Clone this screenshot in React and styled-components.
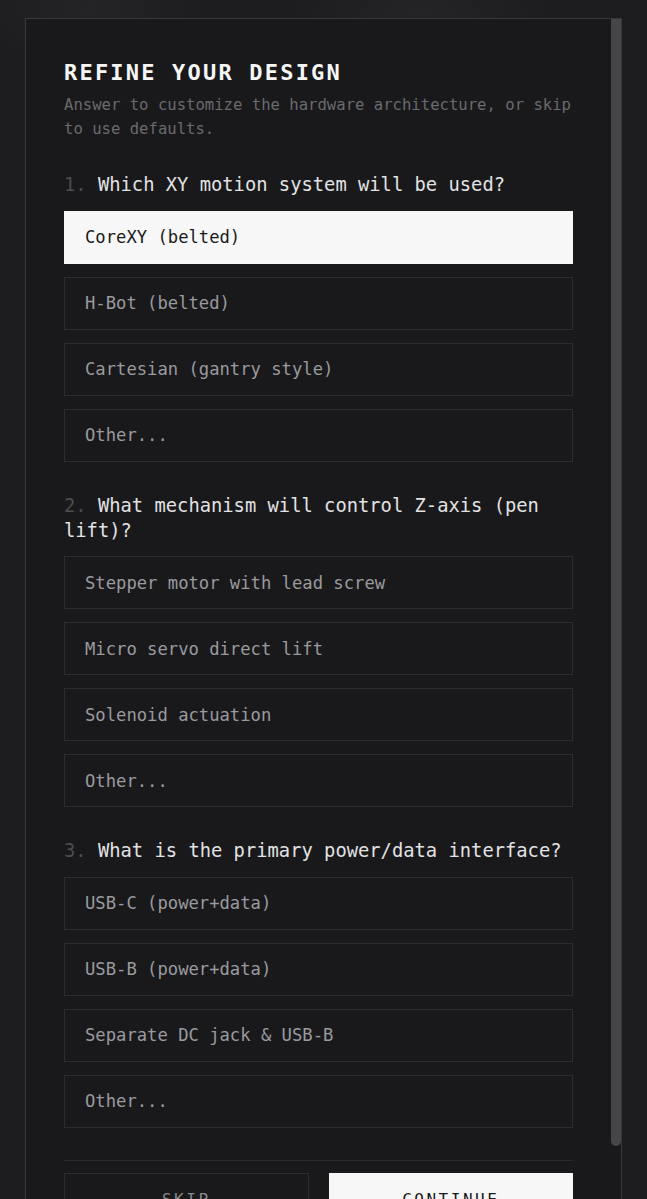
import React, { useState } from 'react'
import styled, { createGlobalStyle } from 'styled-components'

const GlobalStyle = createGlobalStyle`
	html, body {
		margin: 0;
		padding: 0;
		background: #1d1d1f;
		overflow: hidden;
	}
	* {
		box-sizing: border-box;
	}
`

const MONO = `"DejaVu Sans Mono", "Liberation Mono", monospace`

const Page = styled.div`
	min-height: 100vh;
	padding: 18px 25px 0;
	background:
		radial-gradient(ellipse 120px 60px at 90px 10px, rgba(255,255,255,0.03), transparent),
		radial-gradient(ellipse 140px 60px at 420px 15px, rgba(255,255,255,0.03), transparent),
		#1d1d1f;
	font-family: ${MONO};
`

const Modal = styled.div`
	position: relative;
	width: 597px;
	height: 1240px;
	border: 1px solid #38383c;
	background: #19191b;
	overflow: hidden;
`

// fake scrollbar thumb, sits over the right edge of the dialog
const ScrollThumb = styled.div`
	position: absolute;
	top: 0;
	right: 0;
	width: 10px;
	height: 1127px;
	background: #45454a;
	border-radius: 0 0 5px 5px;
`

const Content = styled.div`
	padding: 38px 48px 0 38px;
`

const Title = styled.h2`
	margin: 0;
	font-size: 22px;
	line-height: 32px;
	font-weight: 700;
	letter-spacing: 2.2px;
	color: #f6f6f6;
	text-transform: uppercase;
`

const Subtitle = styled.p`
	margin: 4px 0 0;
	font-size: 15.6px;
	line-height: 24px;
	color: #6a6a6f;
`

const Section = styled.section`
	margin-top: 31px;
`

const Question = styled.div`
	font-size: 18.8px;
	line-height: 25px;
	color: #e2e2e4;
	margin-bottom: 13.5px;
`

const Num = styled.span`
	color: #4c4c51;
`

const Options = styled.div`
	display: flex;
	flex-direction: column;
	gap: 13px;
`

const Option = styled.button`
	display: flex;
	align-items: center;
	height: 53px;
	padding: 0 20px;
	font-family: ${MONO};
	font-size: 17.2px;
	text-align: left;
	cursor: pointer;
	border: 1px solid ${(p) => (p.$active ? '#f7f7f7' : '#2c2c2f')};
	background: ${(p) => (p.$active ? '#f7f7f7' : 'transparent')};
	color: ${(p) => (p.$active ? '#1a1a1c' : '#9a9a9f')};
`

const Divider = styled.hr`
	margin: 32px 0 0;
	border: 0;
	border-top: 1px solid #2a2a2d;
`

const Footer = styled.div`
	display: grid;
	grid-template-columns: 1fr 1fr;
	gap: 20px;
	margin-top: 12px;
`

const ActionButton = styled.button`
	height: 53px;
	font-family: ${MONO};
	font-size: 16px;
	letter-spacing: 2.5px;
	text-transform: uppercase;
	cursor: pointer;
	border: 1px solid ${(p) => (p.$primary ? '#f7f7f7' : '#2c2c2f')};
	background: ${(p) => (p.$primary ? '#f7f7f7' : 'transparent')};
	color: ${(p) => (p.$primary ? '#1a1a1c' : '#88888d')};
`

const questions = [
	{
		text: 'Which XY motion system will be used?',
		options: ['CoreXY (belted)', 'H-Bot (belted)', 'Cartesian (gantry style)', 'Other...'],
	},
	{
		text: 'What mechanism will control Z-axis (pen lift)?',
		options: ['Stepper motor with lead screw', 'Micro servo direct lift', 'Solenoid actuation', 'Other...'],
	},
	{
		text: 'What is the primary power/data interface?',
		options: ['USB-C (power+data)', 'USB-B (power+data)', 'Separate DC jack & USB-B', 'Other...'],
	},
]

const App = () => {
	const [answers, setAnswers] = useState({ 0: 0 })

	return (
		<Page>
			<GlobalStyle />
			<Modal>
				<Content>
					<Title>Refine your design</Title>
					<Subtitle>
						Answer to customize the hardware architecture, or skip to use defaults.
					</Subtitle>

					{questions.map((q, qi) => (
						<Section key={qi}>
							<Question>
								<Num>{qi + 1}.</Num> {q.text}
							</Question>
							<Options>
								{q.options.map((o, oi) => (
									<Option
										key={oi}
										$active={answers[qi] === oi}
										onClick={() => setAnswers((prev) => ({ ...prev, [qi]: oi }))}
									>
										{o}
									</Option>
								))}
							</Options>
						</Section>
					))}

					<Divider />
					<Footer>
						<ActionButton>Skip</ActionButton>
						<ActionButton $primary>Continue</ActionButton>
					</Footer>
				</Content>
				<ScrollThumb />
			</Modal>
		</Page>
	)
}

export default App
